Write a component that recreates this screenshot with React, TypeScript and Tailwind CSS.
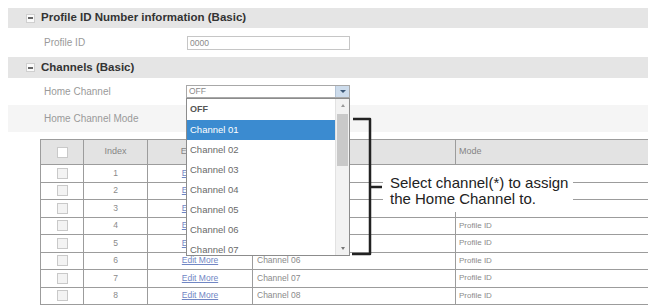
import React from 'react';

const rows = [1, 2, 3, 4, 5, 6, 7, 8];
const options = ['Channel 01', 'Channel 02', 'Channel 03', 'Channel 04', 'Channel 05', 'Channel 06', 'Channel 07'];

const SectionHeader: React.FC<{ title: string; h: string }> = ({ title, h }) => (
  <div className={`flex items-center gap-[6px] pl-[18px] bg-[#e5e5e5] ${h}`}>
    <div className="flex items-center justify-center w-[9px] h-[9px] border border-[#cfcfcf] bg-[#fafafa]">
      <div className="w-[5px] h-[2px] bg-[#666]" />
    </div>
    <span className="text-[11.5px] font-bold text-[#333]">{title}</span>
  </div>
);

const Checkbox: React.FC<{ light?: boolean }> = ({ light }) => (
  <div className={`mx-auto w-[11px] h-[11px] border border-[#c9c9c9] ${light ? 'bg-white' : 'bg-[#f3f3f3]'}`} />
);

export default function App() {
  return (
    <div className="relative w-[648px] h-[306px] overflow-hidden bg-white pt-2 pl-2 font-['Liberation_Sans',Arial,sans-serif]">
      <SectionHeader title="Profile ID Number information (Basic)" h="h-[20px]" />
      <div className="flex items-center h-[29px]">
        <span className="w-[179px] pl-[36px] text-[10px] text-[#9a9a9a]">Profile ID</span>
        <div className="w-[163px] h-[14px] border border-[#c6c6c6] pl-[2px] text-[8.5px] leading-[12px] text-[#8a8a8a]">0000</div>
      </div>

      <SectionHeader title="Channels (Basic)" h="h-[21px]" />
      <div className="flex items-center h-[27px]">
        <span className="w-[178px] pl-[36px] text-[10px] text-[#9a9a9a]">Home Channel</span>
        <div className="relative z-20 w-[164px] h-[13px]">
          <div className="flex h-full border border-[#a8a8a8] bg-white">
            <span className="flex-1 pl-[2px] text-[8.5px] leading-[11px] text-[#8a8a8a]">OFF</span>
            <div className="flex items-center justify-center w-[14px] bg-[#cddcec] border-l border-[#b4c4d6]">
              <div className="w-0 h-0 border-l-[3px] border-r-[3px] border-t-[3px] border-l-transparent border-r-transparent border-t-[#3d5877]" />
            </div>
          </div>
          <div className="absolute left-0 top-[13px] flex w-[164px] h-[158px] overflow-hidden border border-[#8c8c8c] bg-white">
            <div className="flex-1 flex flex-col">
              <div className="shrink-0 h-[21px] pl-[3px] flex items-center text-[9px] font-bold text-[#555]">OFF</div>
              {options.map((o, i) => (
                <div
                  key={o}
                  className={`shrink-0 h-[20px] pl-[3px] flex items-center text-[9.5px] ${i === 0 ? 'bg-[#3b8bd0] text-white' : 'text-[#6a6a6a]'}`}
                >
                  {o}
                </div>
              ))}
            </div>
            <div className="relative w-[14px] bg-[#f2f2f2] border-l border-[#e2e2e2]">
              <div className="absolute left-[5px] top-[5px] w-0 h-0 border-l-[2px] border-r-[2px] border-b-[3px] border-l-transparent border-r-transparent border-b-[#999]" />
              <div className="absolute left-[1px] right-[1px] top-[15px] h-[52px] bg-[#c9c9c9]" />
              <div className="absolute left-[5px] bottom-[5px] w-0 h-0 border-l-[2px] border-r-[2px] border-t-[3px] border-l-transparent border-r-transparent border-t-[#777]" />
            </div>
          </div>
        </div>
      </div>
      <div className="flex items-center h-[27px] bg-[#f5f5f5]">
        <span className="pl-[36px] text-[10px] text-[#9a9a9a]">Home Channel Mode</span>
      </div>

      <div className="mt-[7px] ml-[32px] w-[640px]">
        <table className="w-[640px] table-fixed border-collapse text-[8.5px] text-[#8a8a8a]">
          <colgroup>
            <col className="w-[43px]" />
            <col className="w-[64px]" />
            <col className="w-[105px]" />
            <col className="w-[203px]" />
            <col />
          </colgroup>
          <thead>
            <tr className="h-[25px] bg-[#e3e3e3] text-[9px] text-[#858585]">
              <th className="border border-[#9c9c9c] font-normal"><Checkbox light /></th>
              <th className="border border-[#9c9c9c] font-normal">Index</th>
              <th className="border border-[#9c9c9c] font-normal">Edit More</th>
              <th className="border border-[#9c9c9c] font-normal text-left pl-[4px]">Channel Name</th>
              <th className="border border-[#9c9c9c] font-normal text-left pl-[3px]">Mode</th>
            </tr>
          </thead>
          <tbody>
            {rows.map((r) => (
              <tr key={r} className="h-[17.5px]">
                <td className="border border-[#9c9c9c]"><Checkbox /></td>
                <td className="border border-[#9c9c9c] text-center">{r}</td>
                <td className="border border-[#9c9c9c] text-center">
                  <span className="text-[#7086c4] underline">Edit More</span>
                </td>
                <td className="border border-[#9c9c9c] pl-[4px]">Channel 0{r}</td>
                <td className="border border-[#9c9c9c] pl-[3px] text-[8px]">Profile ID</td>
              </tr>
            ))}
          </tbody>
        </table>
      </div>
      <div className="mt-[1px] h-[4px] bg-[#d6d6d6]" />

      <svg className="absolute left-[350px] top-[115px] z-30" width="40" height="145" viewBox="0 0 40 145" fill="none">
        <path d="M3 4 H20 V139 H2" stroke="#222" strokeWidth="2.5" strokeLinejoin="round" />
        <path d="M20 72 H32" stroke="#222" strokeWidth="2.5" />
      </svg>

      <div className="absolute left-[383px] top-[165px] z-30 w-[190px] h-[47px] bg-white pl-[7px] pt-[10px] text-[15px] leading-[16px] text-[#222]">
        <div className="whitespace-nowrap">Select channel(*) to assign</div>
        <div className="whitespace-nowrap">the Home Channel to.</div>
      </div>
    </div>
  );
}
